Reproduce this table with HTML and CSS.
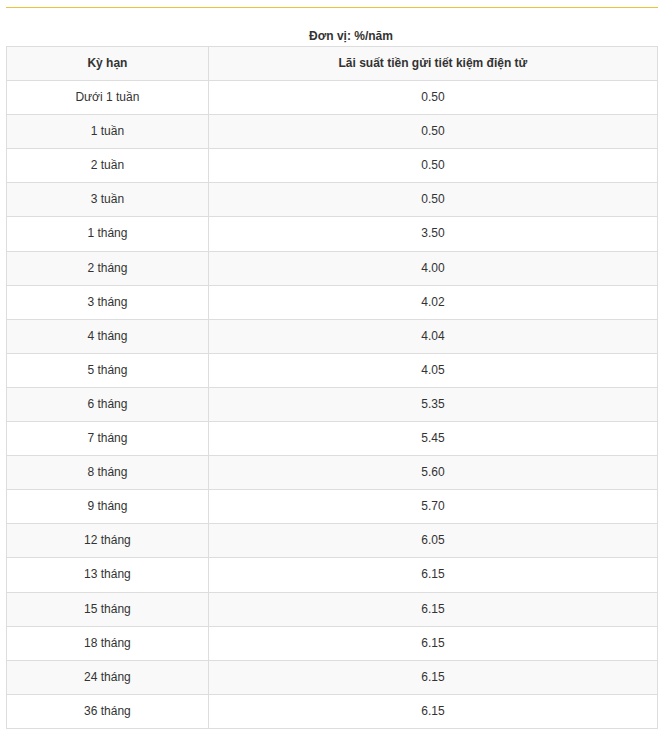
FILE: index.html
```html
<!DOCTYPE html>
<html lang="vi">
<head>
<meta charset="utf-8">
<link rel="stylesheet" href="styles.css">
</head>
<body>
<div class="page">
  <div class="rule"></div>
  <table class="rates">
    <caption class="unit">Đơn vị: %/năm</caption>
    <thead>
      <tr><th class="col-term">Kỳ hạn</th><th>Lãi suất tiền gửi tiết kiệm điện tử</th></tr>
    </thead>
    <tbody>
      <tr><td>Dưới 1 tuần</td><td>0.50</td></tr>
      <tr><td>1 tuần</td><td>0.50</td></tr>
      <tr><td>2 tuần</td><td>0.50</td></tr>
      <tr><td>3 tuần</td><td>0.50</td></tr>
      <tr><td>1 tháng</td><td>3.50</td></tr>
      <tr><td>2 tháng</td><td>4.00</td></tr>
      <tr><td>3 tháng</td><td>4.02</td></tr>
      <tr><td>4 tháng</td><td>4.04</td></tr>
      <tr><td>5 tháng</td><td>4.05</td></tr>
      <tr><td>6 tháng</td><td>5.35</td></tr>
      <tr><td>7 tháng</td><td>5.45</td></tr>
      <tr><td>8 tháng</td><td>5.60</td></tr>
      <tr><td>9 tháng</td><td>5.70</td></tr>
      <tr><td>12 tháng</td><td>6.05</td></tr>
      <tr><td>13 tháng</td><td>6.15</td></tr>
      <tr><td>15 tháng</td><td>6.15</td></tr>
      <tr><td>18 tháng</td><td>6.15</td></tr>
      <tr><td>24 tháng</td><td>6.15</td></tr>
      <tr><td>36 tháng</td><td>6.15</td></tr>
    </tbody>
  </table>
</div>
</body>
</html>
```
FILE: styles.css
```css
html, body {
  margin: 0;
  padding: 0;
  background: #fff;
}
.page {
  padding: 7px 8px 0 6px;
  font-family: "Liberation Sans", Arial, sans-serif;
  font-size: 12px;
  color: #333;
}
.rule {
  height: 1px;
  background: #f0c23b;
}
.rates {
  width: 100%;
  border-collapse: collapse;
  margin-top: 19px;
}
.unit {
  font-weight: bold;
  text-align: center;
  line-height: 18px;
  padding-left: 38px;
  padding-bottom: 1px;
}
.rates th,
.rates td {
  border: 1px solid #ddd;
  text-align: center;
  padding: 8px;
  line-height: 17.1px;
}
.rates th {
  font-weight: bold;
  background: #f9f9f9;
}
.col-term {
  width: 31%;
}
.rates tbody tr:nth-child(even) td {
  background: #f9f9f9;
}
```
